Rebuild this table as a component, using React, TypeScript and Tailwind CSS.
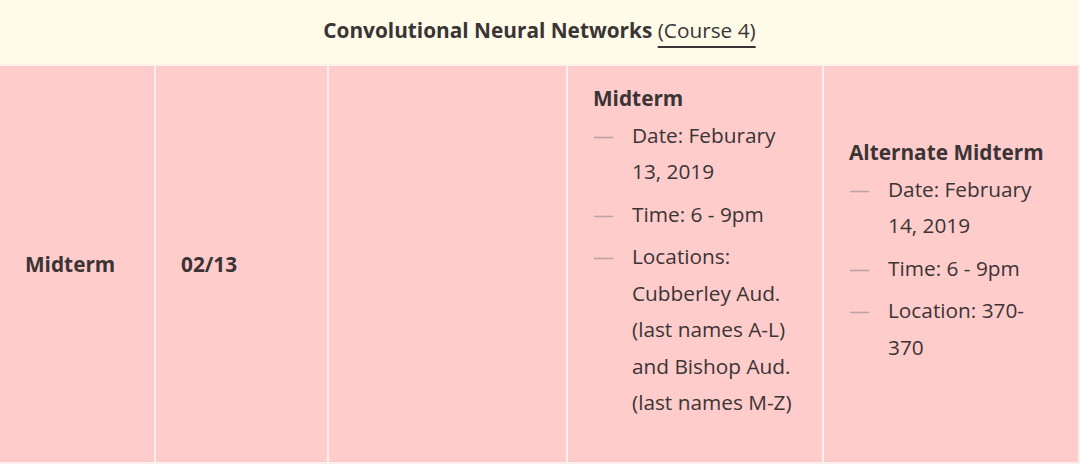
const font = { fontFamily: '"Open Sans", "Noto Sans", sans-serif' };

function Item({ children }: { children: React.ReactNode }) {
  return (
    <li className="flex mb-[6px]">
      <span className="w-[39px] shrink-0 text-[#b9a3a3]">—</span>
      <span>{children}</span>
    </li>
  );
}

function Exam({ title, items }: { title: string; items: string[] }) {
  return (
    <div>
      <div className="font-bold">{title}</div>
      <ul className="mb-[28px]">
        {items.map((t, i) => (
          <Item key={i}>{t}</Item>
        ))}
      </ul>
    </div>
  );
}

export default function App() {
  return (
    <div className="w-[1080px] h-[465px] bg-white overflow-hidden" style={font}>
      <table className="w-[1079px] table-fixed border-collapse text-[#3b3434] text-[20.8px] leading-[36.5px]">
        <colgroup>
          <col className="w-[155px]" />
          <col className="w-[173px]" />
          <col className="w-[239px]" />
          <col className="w-[256px]" />
          <col className="w-[256px]" />
        </colgroup>
        <thead>
          <tr className="bg-[#fefbe8]">
            <th colSpan={5} className="h-[65px] pb-[4px] text-center text-[20.8px] font-normal border-b-2 border-[#fdf1ea]">
              <span className="font-bold">Convolutional Neural Networks</span>{' '}
              <span className="underline decoration-[2px] underline-offset-[8px]">(Course 4)</span>
            </th>
          </tr>
        </thead>
        <tbody>
          <tr className="bg-[#ffcccc]">
            <td className="align-middle px-[25px] font-bold border-r-2 border-b-2 border-[#fbeeee]">Midterm</td>
            <td className="align-middle px-[25px] font-bold border-r-2 border-b-2 border-[#fbeeee]">02/13</td>
            <td className="border-r-2 border-b-2 border-[#fbeeee]"></td>
            <td className="align-middle pl-[25px] pr-[24px] pt-[14px] pb-[13px] border-r-2 border-b-2 border-[#fbeeee]">
              <Exam
                title="Midterm"
                items={[
                  'Date: Feburary 13, 2019',
                  'Time: 6 - 9pm',
                  'Locations: Cubberley Aud. (last names A-L) and Bishop Aud. (last names M-Z)',
                ]}
              />
            </td>
            <td className="align-middle pl-[25px] pr-[24px] border-r-2 border-b-2 border-[#fbeeee]">
              <Exam
                title="Alternate Midterm"
                items={['Date: February 14, 2019', 'Time: 6 - 9pm', 'Location: 370-370']}
              />
            </td>
          </tr>
        </tbody>
      </table>
    </div>
  );
}
